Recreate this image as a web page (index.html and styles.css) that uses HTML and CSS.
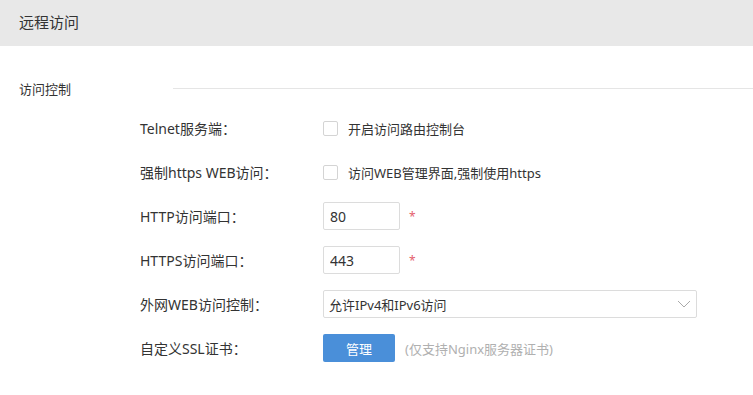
FILE: index.html
```html
<!DOCTYPE html>
<html lang="zh-CN">
<head>
    <meta charset="UTF-8">
    <title>远程访问</title>
    <link rel="stylesheet" href="styles.css">
</head>
<body>
    <div class="page-head">远程访问</div>

    <div class="section-title">
        <span class="section-name">访问控制</span>
        <span class="section-line"></span>
    </div>

    <form class="settings">
        <div class="form-row">
            <label class="row-label">Telnet服务端：</label>
            <label class="check">
                <span class="check-box"></span>
                <span>开启访问路由控制台</span>
            </label>
        </div>

        <div class="form-row">
            <label class="row-label">强制https WEB访问：</label>
            <label class="check">
                <span class="check-box"></span>
                <span>访问WEB管理界面,强制使用https</span>
            </label>
        </div>

        <div class="form-row">
            <label class="row-label" for="http_port">HTTP访问端口：</label>
            <input class="text-input" type="text" id="http_port" value="80">
            <span class="required">*</span>
        </div>

        <div class="form-row">
            <label class="row-label" for="https_port">HTTPS访问端口：</label>
            <input class="text-input" type="text" id="https_port" value="443">
            <span class="required">*</span>
        </div>

        <div class="form-row">
            <label class="row-label">外网WEB访问控制：</label>
            <div class="select">
                <span>允许IPv4和IPv6访问</span>
                <svg class="select-arrow" width="14" height="8" viewBox="0 0 14 8">
                    <polyline points="1,1 7,7 13,1" fill="none" stroke="#aaa" stroke-width="1"/>
                </svg>
            </div>
        </div>

        <div class="form-row">
            <label class="row-label">自定义SSL证书：</label>
            <button type="button" class="btn">管理</button>
            <span class="hint">(仅支持Nginx服务器证书)</span>
        </div>
    </form>
</body>
</html>
```

FILE: styles.css
```css
body {
    margin: 0;
    font-family: "Noto Sans", "Noto Sans CJK SC", sans-serif;
    font-size: 13px;
    color: #333;
    background: #fff;
}
.page-head {
    height: 46px;
    line-height: 44px;
    padding-left: 19px;
    background-color: #e8e8e8;
    font-size: 15px;
    color: #333;
}
.section-title {
    display: flex;
    align-items: center;
    height: 20px;
    margin-top: 32px;
    padding-left: 19px;
}
.section-name {
    width: 154px;
    font-size: 13px;
}
.section-line {
    flex: 1;
    border-top: 1px solid #e5e5e5;
}
.settings {
    margin-top: 8px;
    padding-left: 140px;
}
.form-row {
    display: flex;
    align-items: center;
    height: 44px;
}
.row-label {
    width: 183px;
    flex-shrink: 0;
    font-size: 14px;
}
.check {
    display: flex;
    align-items: center;
    gap: 10px;
}
.check-box {
    width: 13px;
    height: 13px;
    border: 1px solid #d4d4d4;
    border-radius: 2px;
    background: #fff;
}
.text-input {
    box-sizing: border-box;
    width: 77px;
    height: 28px;
    padding: 0 6px;
    border: 1px solid #dcdcdc;
    border-radius: 2px;
    font-family: inherit;
    font-size: 14px;
    color: #333;
}
.required {
    margin-left: 9px;
    color: #e4606d;
    font-size: 12px;
}
.select {
    box-sizing: border-box;
    display: flex;
    align-items: center;
    justify-content: space-between;
    width: 374px;
    height: 28px;
    padding: 0 5px;
    border: 1px solid #dcdcdc;
    border-radius: 2px;
}
.btn {
    width: 72px;
    height: 28px;
    border: none;
    border-radius: 2px;
    background-color: #4a8fd9;
    color: #fff;
    font-family: inherit;
    font-size: 13px;
    cursor: pointer;
}
.hint {
    margin-left: 10px;
    color: #b0b0b0;
}
```
